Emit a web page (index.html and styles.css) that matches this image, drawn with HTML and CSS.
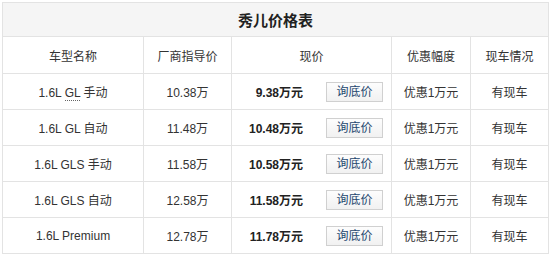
FILE: index.html
```html
<!DOCTYPE html>
<html lang="zh-CN">
<head>
<meta charset="utf-8">
<title>秀儿价格表</title>
<link rel="stylesheet" href="styles.css">
</head>
<body>
<table class="price-table">
  <colgroup>
    <col class="c-name"><col class="c-guide"><col class="c-now"><col class="c-off"><col class="c-stock">
  </colgroup>
  <thead>
    <tr class="title-row"><th colspan="5">秀儿价格表</th></tr>
    <tr class="head-row">
      <th>车型名称</th><th>厂商指导价</th><th>现价</th><th>优惠幅度</th><th>现车情况</th>
    </tr>
  </thead>
  <tbody>
    <tr>
      <td>1.6L <span class="kw">GL</span> 手动</td><td>10.38万</td>
      <td><div class="now"><span class="val">9.38万元</span><span class="btn">询底价</span></div></td>
      <td>优惠1万元</td><td>有现车</td>
    </tr>
    <tr>
      <td>1.6L GL 自动</td><td>11.48万</td>
      <td><div class="now"><span class="val">10.48万元</span><span class="btn">询底价</span></div></td>
      <td>优惠1万元</td><td>有现车</td>
    </tr>
    <tr>
      <td>1.6L GLS 手动</td><td>11.58万</td>
      <td><div class="now"><span class="val">10.58万元</span><span class="btn">询底价</span></div></td>
      <td>优惠1万元</td><td>有现车</td>
    </tr>
    <tr>
      <td>1.6L GLS 自动</td><td>12.58万</td>
      <td><div class="now"><span class="val">11.58万元</span><span class="btn">询底价</span></div></td>
      <td>优惠1万元</td><td>有现车</td>
    </tr>
    <tr>
      <td>1.6L Premium</td><td>12.78万</td>
      <td><div class="now"><span class="val">11.78万元</span><span class="btn">询底价</span></div></td>
      <td>优惠1万元</td><td>有现车</td>
    </tr>
  </tbody>
</table>
</body>
</html>
```
FILE: styles.css
```css
html, body {
  margin: 0;
  padding: 0;
  background: #fff;
}
body {
  padding: 2px;
  font-family: "Liberation Sans", "Noto Sans CJK SC", sans-serif;
  font-size: 12px;
  color: #333;
}
.price-table {
  width: 546px;
  border-collapse: collapse;
  table-layout: fixed;
  border: 1px solid #e3e3e3;
}
.c-name { width: 141px; }
.c-guide { width: 88px; }
.c-now { width: 160px; }
.c-off { width: 79px; }
.c-stock { width: 78px; }
.price-table th,
.price-table td {
  border: 1px solid #e3e3e3;
  text-align: center;
  padding: 0;
  font-weight: normal;
}
.title-row th {
  height: 33px;
  background: #f5f5f5;
  font-size: 15px;
  font-weight: bold;
  color: #222;
}
.head-row th {
  height: 36px;
  font-size: 12px;
}
.price-table td {
  height: 35px;
}
.kw {
  border-bottom: 1px dotted #666;
}
.now {
  display: flex;
  align-items: center;
  justify-content: flex-start;
}
.val {
  width: 71px;
  text-align: right;
  font-weight: bold;
  color: #222;
}
.btn {
  margin-left: 23px;
  width: 55px;
  height: 18px;
  line-height: 18px;
  border: 1px solid #d0d0d0;
  background: linear-gradient(#fdfdfd, #f1f1f1);
  color: #24466e;
  font-size: 12px;
  text-align: center;
}
```
